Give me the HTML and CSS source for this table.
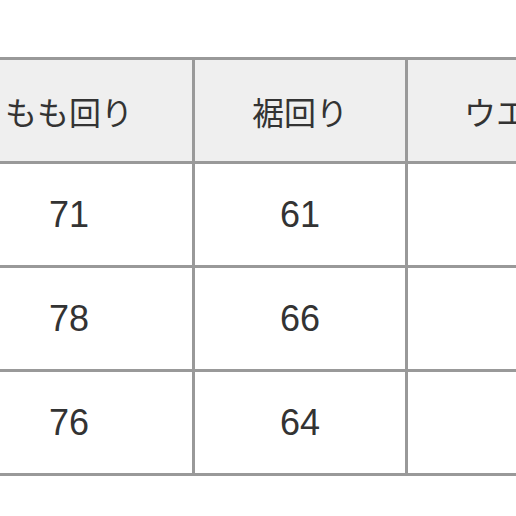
FILE: index.html
```html
<!DOCTYPE html>
<html lang="ja">
<head>
<meta charset="utf-8">
<link rel="stylesheet" href="styles.css">
</head>
<body>
<div class="wrap">
<table class="size">
<colgroup><col class="c1"><col class="c2"><col class="c3"></colgroup>
<thead>
<tr><th>もも回り</th><th>裾回り</th><th>ウエスト</th></tr>
</thead>
<tbody>
<tr><td>71</td><td>61</td><td></td></tr>
<tr><td>78</td><td>66</td><td></td></tr>
<tr><td>76</td><td>64</td><td></td></tr>
</tbody>
</table>
</div>
</body>
</html>
```
FILE: styles.css
```css
html, body {
  margin: 0;
  padding: 0;
  background: #ffffff;
}
.wrap {
  width: 516px;
  height: 516px;
  overflow: hidden;
  padding-top: 57px;
  box-sizing: border-box;
}
.size {
  margin-left: -57px;
  border-collapse: collapse;
  table-layout: fixed;
  width: 705px;
  font-family: "Noto Sans CJK JP", "Noto Sans", sans-serif;
  color: #333333;
}
.c1 { width: 249px; }
.c2 { width: 213px; }
.c3 { width: 243px; }
.size th,
.size td {
  border: 3px solid #999999;
  height: 101px;
  padding: 0;
  text-align: center;
  vertical-align: middle;
  font-weight: normal;
}
.size th {
  background: #efefef;
  font-size: 32px;
  line-height: 1;
}
.size td {
  font-family: "Liberation Sans", "Noto Sans CJK JP", sans-serif;
  font-size: 36px;
  line-height: 1;
}
```
